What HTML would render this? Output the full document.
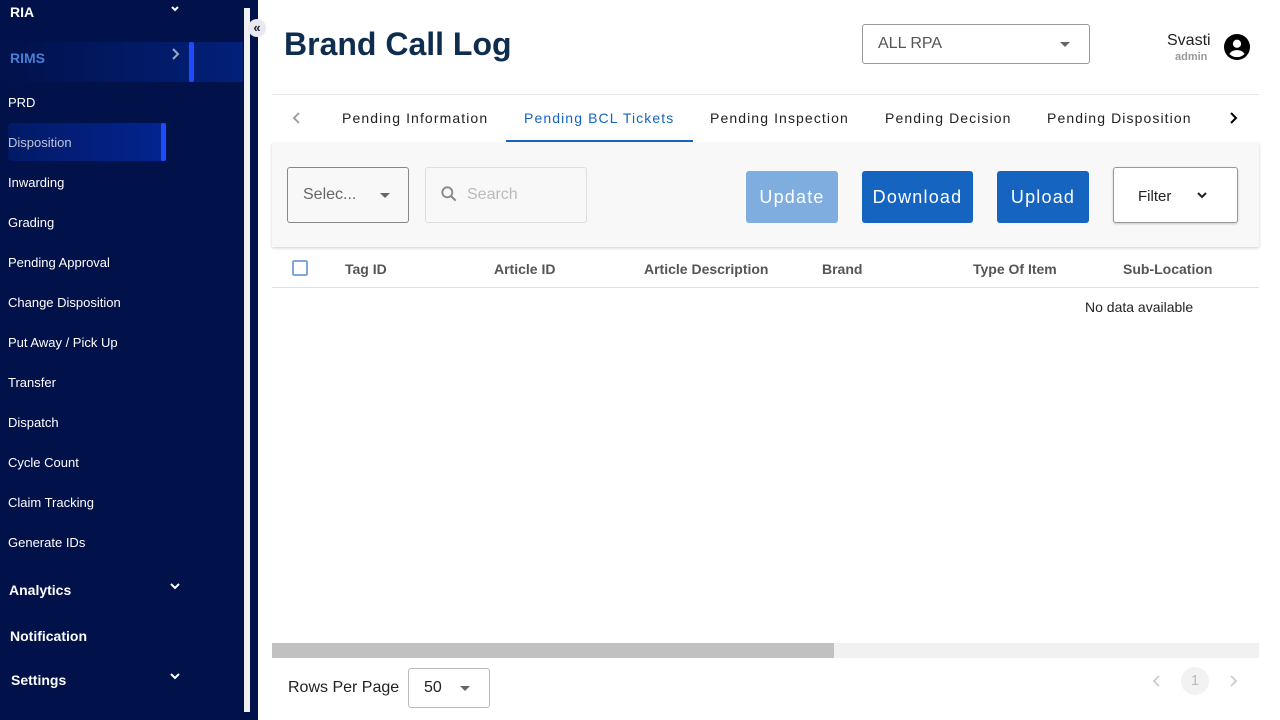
<!DOCTYPE html>
<html><head><style>
*{margin:0;padding:0;box-sizing:border-box}
body{width:1280px;height:720px;overflow:hidden;font-family:"Liberation Sans",Arial,sans-serif;background:#fff;position:relative}
.sb{position:absolute;left:0;top:0;width:258px;height:720px;background:#01114a}
.sb .it{position:absolute;left:8px;color:#fff;font-size:13px}
.sb .b{font-weight:bold;font-size:14px;left:10px}
.track{position:absolute;left:244px;top:8px;width:6px;height:704px;background:#f1f1f1}
.chev{position:absolute}
.abs{position:absolute}
.tab{position:absolute;top:110px;font-size:14px;letter-spacing:1.1px;color:#222}
.btn{position:absolute;top:171px;height:52px;border-radius:3px;color:#fff;font-size:18px;letter-spacing:1.2px;display:flex;align-items:center;justify-content:center}
.th{position:absolute;top:261px;font-size:14px;font-weight:bold;color:#555}
</style></head><body>
<div class="sb">
 <div class="it b" style="top:4px">RIA</div>
 <svg class="chev" style="left:170px;top:5px" width="10" height="8" viewBox="0 0 10 8"><path d="M2 2l3 3 3-3" fill="none" stroke="#fff" stroke-width="2"/></svg>
 <div class="abs" style="left:0;top:42px;width:243px;height:40px;background:linear-gradient(90deg,#01114a,#02207a)"></div>
 <div class="abs" style="left:189px;top:42px;width:5px;height:40px;background:#1a4dff;border-radius:2px"></div>
 <div class="it b" style="top:50px;color:#4a7fd6">RIMS</div>
 <svg class="chev" style="left:170px;top:47px" width="10" height="14" viewBox="0 0 10 14"><path d="M3 2l5 5-5 5" fill="none" stroke="#9ab" stroke-width="2"/></svg>
 <div class="it" style="top:95px">PRD</div>
 <div class="abs" style="left:8px;top:123px;width:158px;height:38px;background:linear-gradient(90deg,#021a66,#032490);border-radius:4px"></div>
 <div class="abs" style="left:161px;top:123px;width:5px;height:38px;background:#1a4dff;border-radius:2px"></div>
 <div class="it" style="top:135px;color:#bcc6dd">Disposition</div>
 <div class="it" style="top:175px">Inwarding</div>
 <div class="it" style="top:215px">Grading</div>
 <div class="it" style="top:255px">Pending Approval</div>
 <div class="it" style="top:295px">Change Disposition</div>
 <div class="it" style="top:335px">Put Away / Pick Up</div>
 <div class="it" style="top:375px">Transfer</div>
 <div class="it" style="top:415px">Dispatch</div>
 <div class="it" style="top:455px">Cycle Count</div>
 <div class="it" style="top:495px">Claim Tracking</div>
 <div class="it" style="top:535px">Generate IDs</div>
 <div class="it b" style="top:582px;left:9px">Analytics</div>
 <svg class="chev" style="left:169px;top:582px" width="12" height="10" viewBox="0 0 12 10"><path d="M2 2l4 4 4-4" fill="none" stroke="#fff" stroke-width="2"/></svg>
 <div class="it b" style="top:628px">Notification</div>
 <div class="it b" style="top:672px;left:11px">Settings</div>
 <svg class="chev" style="left:169px;top:672px" width="12" height="10" viewBox="0 0 12 10"><path d="M2 2l4 4 4-4" fill="none" stroke="#fff" stroke-width="2"/></svg>
 <div class="track"></div>
 <div class="abs" style="left:248px;top:19px;width:18px;height:18px;border-radius:50%;background:#e8e8ee;color:#223;font-size:13px;text-align:center;line-height:17px;font-weight:bold">&laquo;</div>
</div>
<div class="abs" style="left:284px;top:26px;font-size:32px;font-weight:bold;color:#0f2d4f">Brand Call Log</div>
<div class="abs" style="left:862px;top:24px;width:228px;height:40px;border:1px solid #999;border-radius:3px"></div>
<div class="abs" style="left:878px;top:35px;font-size:16px;color:#555">ALL RPA</div>
<div class="abs" style="left:1060px;top:42px;border-left:5px solid transparent;border-right:5px solid transparent;border-top:5px solid #666"></div>
<div class="abs" style="left:1167px;top:32px;font-size:16px;color:#222">Svasti</div>
<div class="abs" style="left:1175px;top:51px;font-size:11px;font-weight:bold;color:#999">admin</div>
<svg class="abs" style="left:1224px;top:34px" width="26" height="26" viewBox="0 0 24 24"><circle cx="12" cy="12" r="12" fill="#000"/><circle cx="12" cy="9" r="3.8" fill="#fff"/><path d="M5 18.5c1.5-2.6 4-3.6 7-3.6s5.5 1 7 3.6A10 10 0 0 1 5 18.5z" fill="#fff"/></svg>
<div class="abs" style="left:272px;top:94px;width:987px;height:1px;background:#e6e6e6"></div>
<svg class="abs" style="left:292px;top:111px" width="10" height="14" viewBox="0 0 10 14"><path d="M7 2L2 7l5 5" fill="none" stroke="#999" stroke-width="1.8"/></svg>
<div class="tab" style="left:342px">Pending Information</div>
<div class="tab" style="left:524px;color:#1565c0">Pending BCL Tickets</div>
<div class="abs" style="left:506px;top:140px;width:187px;height:2px;background:#1565c0"></div>
<div class="tab" style="left:710px">Pending Inspection</div>
<div class="tab" style="left:885px">Pending Decision</div>
<div class="tab" style="left:1047px">Pending Disposition</div>
<svg class="abs" style="left:1228px;top:111px" width="10" height="14" viewBox="0 0 10 14"><path d="M3 2l5 5-5 5" fill="none" stroke="#000" stroke-width="2"/></svg>
<div class="abs" style="left:272px;top:143px;width:987px;height:104px;background:#f8f8f8;box-shadow:0 1px 3px rgba(0,0,0,.2)"></div>
<div class="abs" style="left:287px;top:167px;width:122px;height:56px;border:1px solid #888;border-radius:3px"></div>
<div class="abs" style="left:303px;top:186px;font-size:16px;color:#666">Selec...</div>
<div class="abs" style="left:380px;top:193px;border-left:5px solid transparent;border-right:5px solid transparent;border-top:5px solid #666"></div>
<div class="abs" style="left:425px;top:167px;width:162px;height:56px;border:1px solid #ddd;border-radius:3px"></div>
<svg class="abs" style="left:439px;top:184px" width="20" height="20" viewBox="0 0 24 24"><circle cx="10" cy="10" r="6" fill="none" stroke="#888" stroke-width="2.2"/><path d="M14.5 14.5L20 20" stroke="#888" stroke-width="2.5"/></svg>
<div class="abs" style="left:467px;top:186px;font-size:16px;color:#bbb">Search</div>
<div class="btn" style="left:746px;width:92px;background:#7fade0">Update</div>
<div class="btn" style="left:862px;width:111px;background:#1565c0">Download</div>
<div class="btn" style="left:997px;width:92px;background:#1565c0">Upload</div>
<div class="abs" style="left:1113px;top:167px;width:125px;height:56px;border:1px solid #999;border-radius:3px;background:#fff;box-shadow:0 1px 2px rgba(0,0,0,.2)"></div>
<div class="abs" style="left:1138px;top:188px;font-size:15px;color:#222">Filter</div>
<svg class="abs" style="left:1195px;top:188px" width="14" height="14" viewBox="0 0 14 14"><path d="M3 5l4 4 4-4" fill="none" stroke="#222" stroke-width="2"/></svg>
<div class="abs" style="left:292px;top:260px;width:16px;height:16px;border:2px solid #7fa8dc;border-radius:2px"></div>
<div class="th" style="left:345px">Tag ID</div>
<div class="th" style="left:494px">Article ID</div>
<div class="th" style="left:644px">Article Description</div>
<div class="th" style="left:822px">Brand</div>
<div class="th" style="left:973px">Type Of Item</div>
<div class="th" style="left:1123px">Sub-Location</div>
<div class="abs" style="left:272px;top:287px;width:987px;height:1px;background:#e0e0e0"></div>
<div class="abs" style="left:1085px;top:299px;font-size:14px;color:#222">No data available</div>
<div class="abs" style="left:272px;top:643px;width:987px;height:15px;background:#f1f1f1"></div>
<div class="abs" style="left:272px;top:643px;width:562px;height:15px;background:#c1c1c1"></div>
<div class="abs" style="left:288px;top:679px;font-size:16px;color:#222">Rows Per Page</div>
<div class="abs" style="left:408px;top:668px;width:82px;height:40px;border:1px solid #bbb;border-radius:3px"></div>
<div class="abs" style="left:424px;top:679px;font-size:16px;color:#222">50</div>
<div class="abs" style="left:460px;top:686px;border-left:5px solid transparent;border-right:5px solid transparent;border-top:5px solid #666"></div>
<svg class="abs" style="left:1152px;top:674px" width="10" height="14" viewBox="0 0 10 14"><path d="M7 2L2 7l5 5" fill="none" stroke="#ccc" stroke-width="1.8"/></svg>
<div class="abs" style="left:1181px;top:667px;width:28px;height:28px;border-radius:50%;background:#f2f2f2;color:#bbb;font-size:15px;text-align:center;line-height:28px">1</div>
<svg class="abs" style="left:1228px;top:674px" width="10" height="14" viewBox="0 0 10 14"><path d="M3 2l5 5-5 5" fill="none" stroke="#ccc" stroke-width="1.8"/></svg>
</body></html>
